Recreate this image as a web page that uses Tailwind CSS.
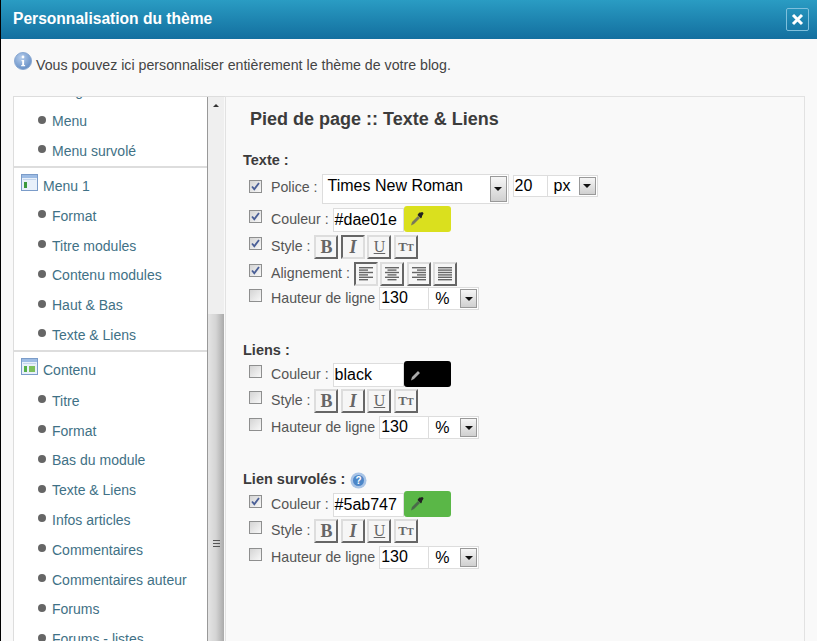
<!DOCTYPE html>
<html lang="fr">

<head>
  <meta charset="UTF-8">
  <title>Personnalisation du thème</title>
  <script src="https://cdn.jsdelivr.net/npm/@tailwindcss/browser@4"></script>
</head>

<body class="bg-black">
  <div class="w-[817px] h-[641px] overflow-hidden pl-[1px] flex font-['Liberation_Sans',Arial,sans-serif]">
    <div class="w-[816px] h-[641px] flex flex-col bg-[#f9f9f9] rounded-tl-[3px]">

      <!-- header -->
      <div class="h-[39px] shrink-0 flex items-center justify-between pl-[12px] pr-[8px] bg-gradient-to-b from-[#2a9cc3] to-[#136f9f]">
        <h1 class="text-white font-bold text-[15.6px] mb-[2px]">Personnalisation du thème</h1>
        <button class="w-[23px] h-[23px] border border-[#7fc0dc] rounded-[2px] flex items-center justify-center">
          <svg width="13" height="13" viewBox="0 0 13 13"><path d="M2 2l9 9M11 2l-9 9" stroke="#fff" stroke-width="3"/></svg>
        </button>
      </div>

      <!-- message -->
      <div class="h-[57px] shrink-0 flex pl-[13px] pt-[13px] text-[14.2px] text-[#444]">
        <svg width="18" height="18" viewBox="0 0 18 18" class="shrink-0">
          <defs><radialGradient id="info" cx="0.4" cy="0.3" r="0.8"><stop offset="0" stop-color="#b5cdec"/><stop offset="1" stop-color="#5b86c0"/></radialGradient></defs>
          <circle cx="9" cy="9" r="8.5" fill="url(#info)" stroke="#8aa9d2"/>
          <circle cx="9" cy="5" r="1.4" fill="#fff"/>
          <path d="M7.5 8h2.6v5h1v1.2H7.2V13h1V9.2h-.7z" fill="#fff"/>
        </svg>
        <p class="ml-[4px] mt-[3px]">Vous pouvez ici personnaliser entièrement le thème de votre blog.</p>
      </div>

      <div class="flex-1 flex pl-[12px] min-h-0">
        <!-- sidebar -->
        <div class="w-[212px] h-[545px] shrink-0 flex border-t border-[#ddd] overflow-hidden">
          <div id="menu" class="w-[195px] h-[544px] shrink-0 bg-white border-l border-r border-l-[#ddd] border-r-[#999] overflow-hidden text-[14px] text-[#3f7186]"></div>
          <div class="w-[16px] flex flex-col bg-[#efefef]">
            <div class="h-[217px] shrink-0 flex justify-center pt-[7px]">
              <div class="w-0 h-0 border-l-[3px] border-r-[3px] border-b-[3px] border-l-transparent border-r-transparent border-b-[#333]"></div>
            </div>
            <div class="flex-1 bg-gradient-to-r from-[#e4e4e4] via-[#d4d4d4] to-[#aaa] flex flex-col items-center gap-[2px] pt-[226px]">
              <div class="w-[7px] h-[1px] bg-[#555]"></div>
              <div class="w-[7px] h-[1px] bg-[#555]"></div>
              <div class="w-[7px] h-[1px] bg-[#555]"></div>
            </div>
          </div>
        </div>

        <!-- panel -->
        <div class="w-[580px] h-[545px] shrink-0 border-t border-r border-l border-[#e2e2e2] pl-[17px] text-[14.2px] text-[#555]">
          <h2 class="h-[46px] pl-[7px] pt-[9px] font-bold text-[#3c3c3c] text-[18px]">Pied de page :: Texte &amp; Liens</h2>
          <div id="form"></div>
        </div>
      </div>
    </div>
  </div>

  <script>
    const menu = [
      ["item", "Image"], ["item", "Menu"], ["item", "Menu survolé"],
      ["head", "Menu 1", "#3c9a3c"],
      ["item", "Format"], ["item", "Titre modules"], ["item", "Contenu modules"], ["item", "Haut & Bas"], ["item", "Texte & Liens"],
      ["head", "Contenu", "#55b04a"],
      ["item", "Titre"], ["item", "Format"], ["item", "Bas du module"], ["item", "Texte & Liens"], ["item", "Infos articles"],
      ["item", "Commentaires"], ["item", "Commentaires auteur"], ["item", "Forums"], ["item", "Forums - listes"]
    ];

    document.getElementById("menu").innerHTML = `<div class="-mt-[20px]">` + menu.map(([type, label, color], i) => {
      const text = label.replace("&", "&amp;");
      if (type === "item") {
        return `<div class="h-[29.8px] flex items-center pl-[24px]"><span class="w-[8px] h-[8px] rounded-full bg-[#666] mb-[4px] mr-[6px]"></span><span>${text}</span></div>`;
      }
      return `<div class="${label === "Contenu" ? 'h-[36px]' : 'h-[35px]'} border-t-2 border-[#ddd] w-[193px] flex items-start pl-[7px] pt-[6px]">
        <svg width="17" height="17" viewBox="0 0 17 17" class="mr-[5px]"><rect x=".5" y=".5" width="16" height="16" fill="#e8f0fa" stroke="#7b9cc9"/><rect x="1" y="1" width="15" height="3" fill="#9dbce4"/><rect x="2" y="5" width="13" height="1" fill="#c4d6ec"/><rect x="3" y="8" width="3" height="6" fill="${color}"/>${label === "Contenu" ? '<rect x="8" y="8" width="6" height="6" fill="#7cc05c"/>' : ''}</svg>
        <span class="mt-[2px]">${text}</span></div>`;
    }).join("") + `</div>`;

    const check = on => `<span class="w-[13px] h-[13px] mb-[6px] mr-[9px] shrink-0 border border-[#8e8f8f] bg-gradient-to-br from-[#d4d4d4] to-[#f8f8f8] flex items-center justify-center">${on ? '<svg width="9" height="9" viewBox="0 0 9 9"><path d="M1 4.5l2.3 2.7L8 1" fill="none" stroke="#4a5f97" stroke-width="1.8"/></svg>' : ''}</span>`;

    const arrow = `<span class="w-[17px] self-stretch border border-[#999] bg-gradient-to-b from-[#f6f6f6] to-[#d0d0d0] flex items-center justify-center"><span class="w-0 h-0 border-l-[4px] border-r-[4px] border-t-[4px] border-l-transparent border-r-transparent border-t-[#111]"></span></span>`;

    const unit = (value, u) => `<span class="flex h-[23px] text-[16px] text-black">
      <span class="w-[50px] h-full bg-white border border-[#ddd] pl-[1px] leading-[20px]">${value}</span>
      <span class="w-[50px] h-full bg-white border border-[#ddd] border-l-0 pl-[6px] leading-[20px] flex justify-between pr-[1px] py-[1px]">${u}${arrow}</span></span>`;

    const btn = (content, active) => `<span class="w-[24px] h-[24px] mr-[2.5px] shrink-0 flex items-center justify-center bg-[#f6f6f6] border-2 ${active ? 'border-t-[#666] border-l-[#666] border-b-[#ddd] border-r-[#ddd]' : 'border-t-[#ddd] border-l-[#ddd] border-b-[#666] border-r-[#666]'}">${content}</span>`;

    const glyph = {
      b: `<span class="font-['Liberation_Serif',serif] font-bold text-[18px] leading-none text-[#666]">B</span>`,
      i: `<span class="font-['Liberation_Serif',serif] font-bold italic text-[18px] leading-none text-[#666]">I</span>`,
      u: `<span class="font-['Liberation_Serif',serif] underline text-[16px] leading-none text-[#666]">U</span>`,
      t: `<span class="font-['Liberation_Serif',serif] font-bold text-[13px] leading-none text-[#666]">T<span class="text-[10px]">T</span></span>`
    };

    const alignIcon = kind => {
      const lines = [0, 1, 2, 3, 4, 5].map(n => {
        const w = kind === "justify" || n % 2 === 0 ? 14 : 9;
        const x = kind === "left" || kind === "justify" ? 0 : kind === "center" ? (14 - w) / 2 : 14 - w;
        return `<rect x="${x}" y="${n * 2.4}" width="${w}" height="1.4" fill="#666"/>`;
      }).join("");
      return `<svg width="14" height="14" viewBox="0 0 14 14">${lines}</svg>`;
    };

    const styleRow = (on, italic) => `<div class="h-[27px] flex items-center pl-[6px]">${check(on)}<span class="mr-[4px]">Style :</span>${btn(glyph.b)}${btn(glyph.i, italic)}${btn(glyph.u)}${btn(glyph.t)}</div>`;

    const colorRow = (on, value, bg, body, head) => `<div class="h-[28px] flex items-center pl-[6px]">${check(on)}<span class="mr-[4px] mt-[2px]">Couleur :</span>
      <span class="w-[71px] h-[24px] mt-[1px] bg-white border border-[#ddd] pl-[1px] text-[16px] text-black leading-[21px]">${value}</span>
      <span class="w-[47px] h-[26px] rounded-[3px] pl-[5px] flex items-center" style="background:${bg}">
        <svg width="16" height="16" viewBox="0 0 16 16"><path d="M2 14.500L3 11l6-6 2 2-6 6z" fill="${body}"/><path d="M8.500 4l3.500 3.500 1-1.500 0-1 1-1.500a1.400 1.400 0 0 0-2-2L10.500 1.500 9.500 2.500z" fill="${head}"/></svg>
      </span></div>`;

    const lineRow = on => `<div class="h-[25px] flex items-center pl-[6px]">${check(on)}<span class="mr-[4px]">Hauteur de ligne</span>${unit("130", "%")}</div>`;

    const label = (text, extra = "") => `<div class="h-[16px] flex items-center font-bold text-[14.5px] text-[#3c3c3c]">${text}${extra}</div>`;

    const help = `<svg width="17" height="17" viewBox="0 0 17 17" class="ml-[5px]"><circle cx="8.500" cy="8.500" r="8" fill="#a9c4e6"/><circle cx="8.500" cy="8.500" r="5.500" fill="#4c86c8"/><text x="8.500" y="12" text-anchor="middle" font-size="10" font-weight="700" fill="#fff">?</text></svg>`;

    document.getElementById("form").innerHTML = `
      <div class="mt-[10px]">${label("Texte :")}</div>
      <div class="h-[32px] mt-[4px] flex items-center pl-[6px]">${check(true)}<span class="mr-[4px] mb-[2px]">Police :</span>
        <span class="w-[187px] h-[30px] bg-white border border-[#ddd] flex justify-between pl-[5px] py-[1px] pr-[1px] text-[16px] text-black leading-[20px]">Times New Roman${arrow}</span>
        <span class="w-[35px] h-[22px] ml-[4px] mb-[6px] bg-white border border-[#ddd] pl-[1px] text-[16px] text-black leading-[19px]">20</span>
        <span class="w-[50px] h-[22px] mb-[6px] bg-white border border-[#ddd] border-l-0 flex justify-between pl-[6px] py-[1px] pr-[1px] text-[16px] text-black leading-[18px]">px${arrow}</span>
      </div>
      ${colorRow(true, "#dae01e", "#dae01e", "#7a7a5a", "#222")}
      ${styleRow(true, true)}
      <div class="h-[27px] flex items-center pl-[6px]">${check(true)}<span class="mr-[4px]">Alignement :</span>${btn(alignIcon("left"), true)}${btn(alignIcon("center"))}${btn(alignIcon("right"))}${btn(alignIcon("justify"))}</div>
      <div class="-mt-[1px]">${lineRow(false)}</div>

      <div class="mt-[32px]">${label("Liens :")}</div>
      <div class="mt-[1px]">${colorRow(false, "black", "#000", "#aaa", "#000")}</div>
      <div class="-mt-[1px]">${styleRow(false)}</div>
      <div class="mt-[1px]">${lineRow(false)}</div>

      <div class="mt-[32px]">${label("Lien survolés :", help)}</div>
      <div class="mt-[2px]">${colorRow(true, "#5ab747", "#5ab747", "#4a6a4a", "#222")}</div>
      <div class="-mt-[1px]">${styleRow(false)}</div>
      <div class="mt-[1px]">${lineRow(false)}</div>`;
  </script>
</body>

</html>
